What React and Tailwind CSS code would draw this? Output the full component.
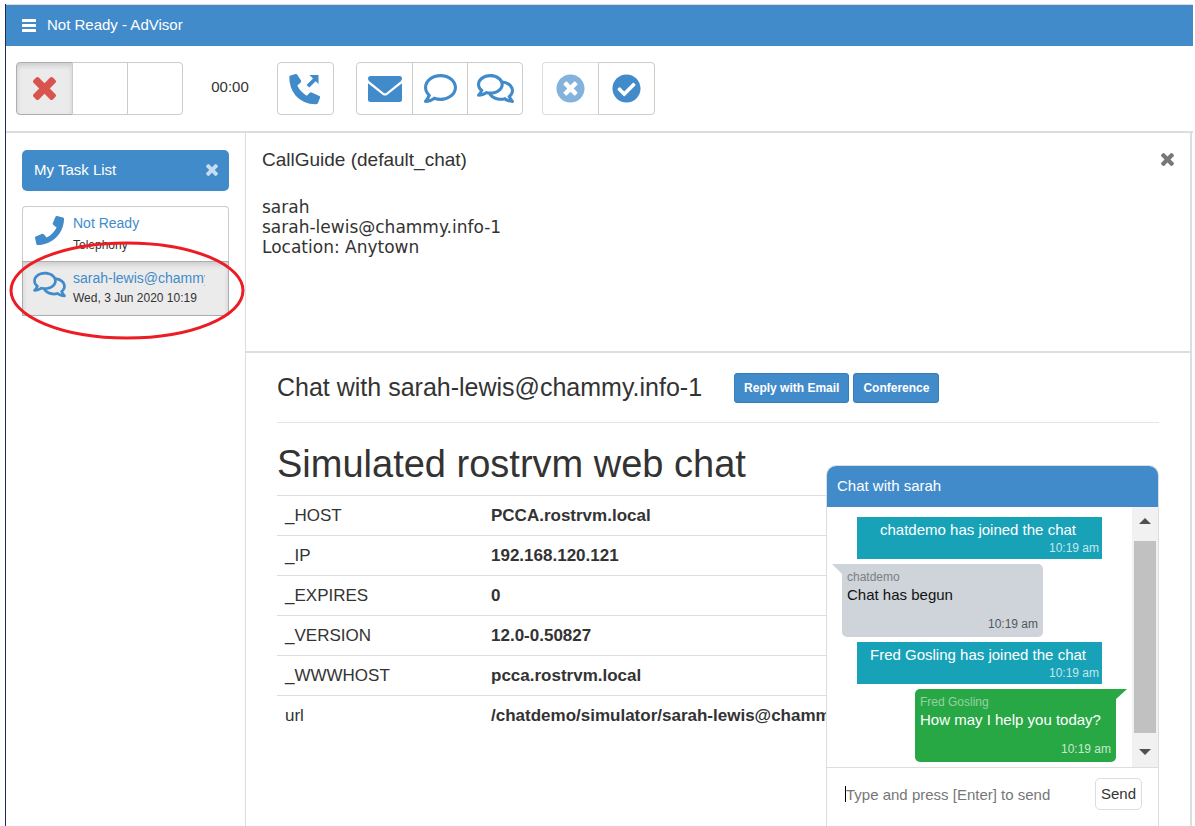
import React from "react";
import { FaPhone, FaCheckCircle, FaTimesCircle, FaRegComment, FaRegComments } from "react-icons/fa";

const rows = [
  ["_HOST", "PCCA.rostrvm.local"],
  ["_IP", "192.168.120.121"],
  ["_EXPIRES", "0"],
  ["_VERSION", "12.0-0.50827"],
  ["_WWWHOST", "pcca.rostrvm.local"],
  ["url", "/chatdemo/simulator/sarah-lewis@chammy.info-1"],
];

function CrossIcon({ className }) {
  return (
    <svg viewBox="302 366 1188 1188" fill="currentColor" className={className} aria-hidden="true">
      <path d="M1490 1322q0 40-28 68l-136 136q-28 28-68 28t-68-28l-294-294-294 294q-28 28-68 28t-68-28l-136-136q-28-28-28-68t28-68l294-294-294-294q-28-28-28-68t28-68l136-136q28-28 68-28t68 28l294 294 294-294q28-28 68-28t68 28l136 136q28 28 28 68t-28 68l-294 294 294 294q28 28 28 68z" />
    </svg>
  );
}

function BarsIcon({ className }) {
  return (
    <svg viewBox="0 0 14 13" fill="currentColor" className={className} aria-hidden="true">
      <rect width="14" height="3" rx="0.5" />
      <rect y="5" width="14" height="3" rx="0.5" />
      <rect y="10" width="14" height="3" rx="0.5" />
    </svg>
  );
}

function EnvelopeIcon({ className }) {
  return (
    <svg viewBox="0 0 34 26" fill="currentColor" className={className} aria-hidden="true">
      <path d="M2.500 0h29Q34 0 34 2.500q0 1.600-1.300 2.700L18.500 16.700q-1.500 1.100-3 0L1.300 5.200Q0 4.100 0 2.500 0 0 2.500 0z" />
      <path d="M0 7.300 14.600 18.700q2.400 1.700 4.800 0L34 7.300V23.500q0 2.500-2.500 2.500h-29Q0 26 0 23.500z" />
    </svg>
  );
}

function OutgoingCallIcon({ className }) {
  return (
    <svg viewBox="0 0 32 32" fill="currentColor" className={className} aria-hidden="true">
      <path d="M1.500 2.500 6.500 1q1.300-.2 1.800.8L12 7.600q.5 1-.3 1.900L8.300 12.600q3 6.500 9.500 10.100l3-3q.8-.7 1.900-.3l7.700 3.500q1 .5.7 1.600l-2 5.300q-.5 1.300-1.900 1.400Q14.500 31.500 6.500 22.500.2 15 .3 3.800q.1-1 1.200-1.300z" />
      <path d="M20.500 2h9v9l-2.800-2.700-6.400 6.300-2.700-2.700 6.400-6.300z" />
    </svg>
  );
}

function ToolButton({ label, children, className = "" }) {
  return (
    <button
      aria-label={label}
      className={"-ml-px flex h-[53px] w-14 items-center justify-center border border-[#ccc] text-[#428bca] first:ml-0 first:w-[57px] first:rounded-l last:rounded-r " + className}
    >
      {children}
    </button>
  );
}

function Notice({ text }) {
  return (
    <div className="mr-[30px] ml-[30px] h-[42px] bg-[#17a2b8] pr-[3px] text-white">
      <p className="pt-1 text-center text-[15px] leading-[18px]">{text}</p>
      <p className="text-right text-xs leading-[18px] text-white/75">10:19 am</p>
    </div>
  );
}

function Bubble({ author, text, className, tail, authorClass, timeClass }) {
  return (
    <div className={"relative h-[73px] w-[201px] rounded-[5px] px-[5px] pt-1 " + className}>
      {tail}
      <p className={"text-xs leading-[18px] " + authorClass}>{author}</p>
      <p className="text-[15px] leading-[18px]">{text}</p>
      <p className={"pt-2.5 text-right text-xs leading-5 " + timeClass}>10:19 am</p>
    </div>
  );
}

function ChatPanel() {
  return (
    <section className="absolute top-[112px] right-[31px] bottom-0 flex w-[333px] flex-col overflow-hidden rounded-t-[10px] border border-b-0 border-[#ddd] bg-white">
      <h2 className="flex h-[41px] shrink-0 items-center bg-[#428bca] px-2.5 text-[15px] text-white">Chat with sarah</h2>
      <div className="flex h-[261px] shrink-0 border-b border-[#ddd]">
        <div className="flex min-w-0 flex-1 flex-col gap-[5px] pt-2.5">
          <Notice text="chatdemo has joined the chat" />
          <Bubble
            author="chatdemo"
            text="Chat has begun"
            className="ml-[15px] rounded-tl-none bg-[#ced4da] text-[#111]"
            authorClass="text-[#7b7f83]"
            timeClass="text-[#55585b]"
            tail={
              <svg viewBox="0 0 11 11" className="absolute top-0 -left-[10px] size-[11px] fill-[#ced4da]" aria-hidden="true">
                <path d="M0 0h11v11z" />
              </svg>
            }
          />
          <Notice text="Fred Gosling has joined the chat" />
          <Bubble
            author="Fred Gosling"
            text="How may I help you today?"
            className="mr-4 self-end rounded-tr-none bg-[#28a745] text-white"
            authorClass="text-white/50"
            timeClass="text-white/75"
            tail={
              <svg viewBox="0 0 12 11" className="absolute top-0 -right-[11px] h-[11px] w-3 fill-[#28a745]" aria-hidden="true">
                <path d="M0 0h12L0 11z" />
              </svg>
            }
          />
        </div>
        <div className="flex w-[26px] flex-col items-center bg-[#f1f1f1]" aria-hidden="true">
          <svg viewBox="0 0 12 6" className="mt-[11px] mb-[17px] h-1.5 w-3 fill-[#505050]"><path d="M0 6 6 0l6 6z" /></svg>
          <div className="mb-4 w-[22px] flex-1 bg-[#c1c1c1]" />
          <svg viewBox="0 0 12 6" className="mb-3 h-1.5 w-3 fill-[#505050]"><path d="M0 0h12L6 6z" /></svg>
        </div>
      </div>
      <form className="flex items-center pt-2.5 pr-4 pl-[18px]" onSubmit={(e) => e.preventDefault()}>
        <span className="h-4 w-px bg-black" aria-hidden="true" />
        <input
          aria-label="Message"
          placeholder="Type and press [Enter] to send"
          className="h-8 min-w-0 flex-1 text-[15px] outline-none placeholder:text-[#777]"
        />
        <button className="h-8 w-[47px] rounded-[5px] border border-[#ddd] text-[15px] text-[#333]">Send</button>
      </form>
    </section>
  );
}

export default function App() {
  return (
    <div className="flex h-screen flex-col bg-white pt-1 pr-0.5 pl-[5px] font-['Liberation_Sans',Arial,sans-serif] text-[#333]">
      <div className="flex min-h-0 flex-1 flex-col border-l border-[#1f2a56]">
        <header className="flex h-[42px] shrink-0 items-center gap-[11px] border-t border-[#ddd] bg-[#428bca] pl-4 text-[15px] text-white">
          <button aria-label="Menu"><BarsIcon className="h-[13px] w-3.5" /></button>
          <h1>Not Ready - AdVisor</h1>
        </header>

        <div className="flex h-[87px] shrink-0 items-center border-b-2 border-[#ddd] pl-2.5">
          <div className="flex">
            <ToolButton label="Not ready" className="border-[#adadad]! bg-[#ebebeb] shadow-[inset_0_3px_5px_rgba(0,0,0,0.125)]">
              <CrossIcon className="size-[23px] text-[#d9534f]" />
            </ToolButton>
            <ToolButton label="Ready" />
            <ToolButton label="Work" />
          </div>
          <span className="w-[94px] pb-0.5 text-center text-[15px]">00:00</span>
          <div className="flex">
            <ToolButton label="Outgoing call"><OutgoingCallIcon className="mr-0.5 size-8" /></ToolButton>
          </div>
          <div className="ml-[22px] flex">
            <ToolButton label="Email"><EnvelopeIcon className="h-[26px] w-[34px]" /></ToolButton>
            <ToolButton label="Chat"><FaRegComment className="size-[33px]" /></ToolButton>
            <ToolButton label="Conference chat"><FaRegComments className="h-[33px] w-[37px]" /></ToolButton>
          </div>
          <div className="ml-[19px] flex">
            <ToolButton label="Cancel" className="w-14! border-r-0 opacity-65"><FaTimesCircle className="size-[29px]" /></ToolButton>
            <ToolButton label="Complete" className="ml-0! w-[57px]!"><FaCheckCircle className="size-[29px]" /></ToolButton>
          </div>
        </div>

        <div className="flex min-h-0 flex-1">
          <aside className="relative w-60 shrink-0 border-r border-[#ddd] px-4 pt-[17px]">
            <div className="flex h-[41px] items-center justify-between rounded-[5px] bg-[#428bca] pr-[11px] pl-3 text-[15px] text-white">
              <h2>My Task List</h2>
              <button aria-label="Close task list"><CrossIcon className="mb-0.5 size-3 text-white/70" /></button>
            </div>
            <ul className="mt-[15px]">
              <li className="flex h-[55px] rounded-t border border-b-0 border-[#ccc]">
                <FaPhone className="mt-[9px] ml-3 size-[29px] text-[#428bca]" />
                <div className="ml-[9px]">
                  <a href="#telephony" className="mt-1.5 block text-sm leading-5 text-[#428bca]">Not Ready</a>
                  <p className="text-xs leading-6">Telephony</p>
                </div>
              </li>
              <li className="flex h-[55px] border border-[#adadad] bg-[#ebebeb] shadow-[inset_0_3px_5px_rgba(0,0,0,0.125)]">
                <FaRegComments className="mt-2 ml-[10px] h-[29px] w-[33px] shrink-0 text-[#428bca]" />
                <div className="ml-[7px] w-[132px]">
                  <a href="#chat" className="mt-1.5 block overflow-hidden text-sm leading-5 whitespace-nowrap text-[#428bca]">sarah-lewis@chammy.info-1</a>
                  <p className="text-xs leading-5 whitespace-nowrap">Wed, 3 Jun 2020 10:19</p>
                </div>
              </li>
            </ul>
            <svg viewBox="0 0 238 100" className="pointer-events-none absolute top-[108px] left-[3px] z-10 h-[100px] w-[238px]" fill="none" aria-hidden="true">
              <ellipse cx="118" cy="49.500" rx="116" ry="47.500" stroke="#ed1c24" strokeWidth="3" />
            </svg>
          </aside>

          <main className="mr-px flex min-w-0 flex-1 flex-col border-r-2 border-[#ddd]">
            <section className="flex h-[220px] shrink-0 items-start justify-between border-b-2 border-[#ddd] pt-4 pr-4 pl-4">
              <div>
                <h2 className="text-[19px] leading-[22px]">CallGuide (default_chat)</h2>
                <div className="mt-[26px] font-['DejaVu_Sans',Verdana,sans-serif] text-[17px] leading-5">
                  <p>sarah</p>
                  <p>sarah-lewis@chammy.info-1</p>
                  <p>Location: Anytown</p>
                </div>
              </div>
              <button aria-label="Close guide" className="mt-1"><CrossIcon className="size-[13px] text-[#777]" /></button>
            </section>

            <section className="relative min-h-0 flex-1 overflow-hidden pr-[31px] pl-[31px]">
              <div className="flex h-[70px] items-center border-b border-[#e5e5e5]">
                <h2 className="text-[25px]">Chat with sarah-lewis@chammy.info-1</h2>
                <button className="ml-8 h-[30px] rounded-[3px] border border-[#357ebd] bg-[#428bca] px-[9px] text-xs font-bold text-white">Reply with Email</button>
                <button className="ml-1 h-[30px] rounded-[3px] border border-[#357ebd] bg-[#428bca] px-[9px] text-xs font-bold text-white">Conference</button>
              </div>
              <h1 className="pt-5 pb-[9px] text-[38px] leading-[43px]">Simulated rostrvm web chat</h1>
              <table className="w-full table-fixed text-[17px]">
                <tbody>
                  {rows.map(([name, value]) => (
                    <tr key={name} className="h-10 border-t border-[#ddd]">
                      <th scope="row" className="w-[206px] px-2 text-left font-normal">{name}</th>
                      <td className="px-2 font-bold whitespace-nowrap">{value}</td>
                    </tr>
                  ))}
                </tbody>
              </table>
              <ChatPanel />
            </section>
          </main>
        </div>
      </div>
    </div>
  );
}
